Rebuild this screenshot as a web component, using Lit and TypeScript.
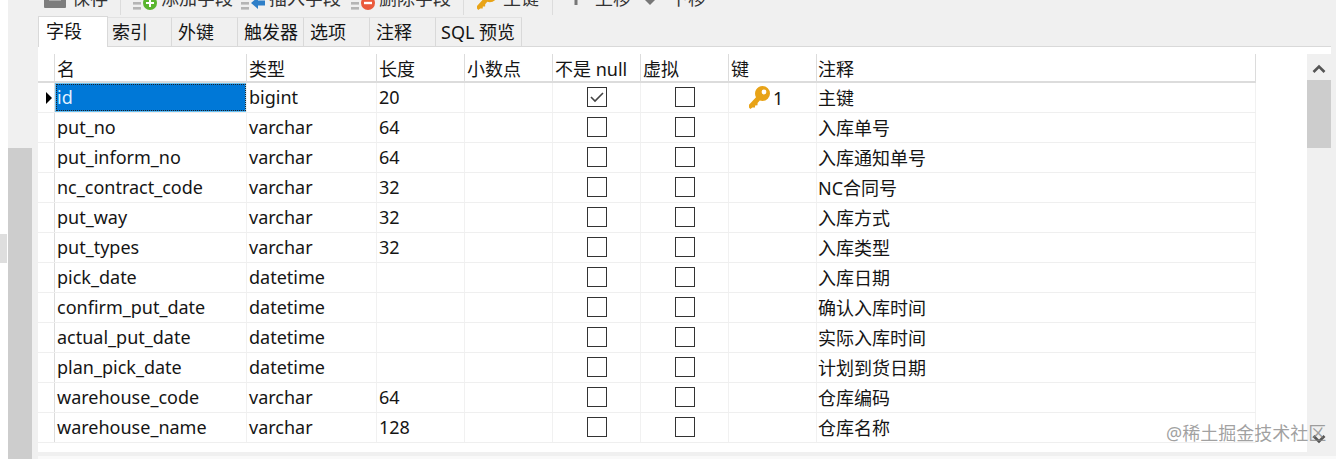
import { LitElement, html, css, svg } from "lit";
import { customElement } from "lit/decorators.js";

type Row = [string, string, string, string];
const rows: Row[] = [
  ["id", "bigint", "20", "主键"],
  ["put_no", "varchar", "64", "入库单号"],
  ["put_inform_no", "varchar", "64", "入库通知单号"],
  ["nc_contract_code", "varchar", "32", "NC合同号"],
  ["put_way", "varchar", "32", "入库方式"],
  ["put_types", "varchar", "32", "入库类型"],
  ["pick_date", "datetime", "", "入库日期"],
  ["confirm_put_date", "datetime", "", "确认入库时间"],
  ["actual_put_date", "datetime", "", "实际入库时间"],
  ["plan_pick_date", "datetime", "", "计划到货日期"],
  ["warehouse_code", "varchar", "64", "仓库编码"],
  ["warehouse_name", "varchar", "128", "仓库名称"],
];
const headers = ["名", "类型", "长度", "小数点", "不是 null", "虚拟", "键", "注释"];
const tabs = ["字段", "索引", "外键", "触发器", "选项", "注释", "SQL 预览"];

const keyIcon = (w: number, h: number, cls = "") => html`<svg class=${cls} width=${w} height=${h} viewBox="0 0 21 23">
  <path fill="#e8a317" d="M13.5 0a7.5 7.5 0 0 1 0 15c-1 0-1.9-.2-2.7-.5L8.6 17l-.1 2.3-2.4.1-.1 2.1-2.6.1L1.3 23 0 21.4v-2.6l7-7.6A7.5 7.5 0 0 1 13.5 0z"/>
  <circle cx="15" cy="6" r="2.4" fill="#fff"/></svg>`;
const lines = svg`<rect x="0" y="3" width="8" height="2.6" fill="#b5b5b5"/><rect x="0" y="8" width="8" height="2.6" fill="#b5b5b5"/><rect x="0" y="13" width="8" height="2.6" fill="#b5b5b5"/>`;

@customElement("app-root")
export class AppRoot extends LitElement {
  static styles = css`
    :host { display: block; width: 1341px; height: 459px; position: relative; overflow: hidden; background: #fff;
      font-family: "Noto Sans", "Noto Sans CJK SC", sans-serif; font-size: 18px; color: #151515; }
    .shell { display: flex; height: 459px; }
    .rail { width: 38px; flex: none; display: flex; }
    .rail-edge { width: 8px; flex: none; display: flex; flex-direction: column; padding-top: 234px; box-sizing: border-box; }
    .rail-chip { width: 7px; height: 29px; background: #dedede; }
    .rail-track { flex: 1; background: #f0f0f0; display: flex; padding: 148px 6px 0 0; }
    .rail-thumb { flex: 1; background: #cdcdcd; }
    .main { width: 1298px; flex: none; background: #f0f0f0; display: flex; flex-direction: column; }
    .toolbar { height: 15px; flex: none; overflow: hidden; display: flex; align-items: flex-end; }
    .tools { display: flex; align-items: center; height: 30px; flex: none; margin-bottom: 2px; line-height: 30px; color: #333; white-space: nowrap; }
    .tool { display: flex; align-items: center; gap: 4px; }
    .sep { width: 1px; height: 34px; background: #dcdcdc; }
    .ic { margin-top: 10px; }
    .ic-key { margin-top: 2px; }
    .ic-save { margin-top: -2px; }
    .tabs { height: 31px; flex: none; display: flex; align-items: flex-end; }
    .tab { height: 29px; box-sizing: border-box; padding-left: 6px; width: 66px; background: #f0f0f0; border-right: 1px solid #d9d9d9; border-top: 1px solid #e2e2e2; line-height: 28px; white-space: nowrap; }
    .tab.second { width: 64px; padding-left: 4px; }
    .tab.sql { width: 86px; padding-left: 5px; }
    .tab.active { height: 31px; width: 70px; background: #fff; border: 1px solid #d9d9d9; border-bottom: none; padding-left: 7px; line-height: 28px; margin-bottom: -1px; position: relative; z-index: 1; }
    .panel { height: 406px; flex: none; width: 1293px; background: #fff; border-top: 1px solid #d9d9d9; box-sizing: border-box; padding-top: 7px; display: flex; }
    .foot { height: 4px; flex: none; }
    .foot-light { flex: 1; background: #f9f9f9; }
    .grid { width: 1218px; flex: none; align-self: flex-start; }
    .row { display: grid; grid-template-columns: 17px 192px 130px 88px 88px 88px 88px 88px 439px; height: 30px; box-sizing: border-box; border-bottom: 1px solid #efefef; }
    .row.head { height: 29px; border-bottom: 2px solid #dcdcdc; }
    .cell { box-sizing: border-box; border-right: 1px solid #f1f1f1; padding: 0 0 1px 2px; white-space: nowrap; overflow: hidden; display: flex; align-items: center; }
    .head .cell { border-right: 1px solid #dcdcdc; padding-bottom: 0; padding-top: 1px; }
    .cell.note { padding-left: 1px; }
    .row .ind { border-right: 1px solid #dcdcdc; padding: 0 0 0 8px; }
    .tri { width: 0; height: 0; border-left: 6px solid #000; border-top: 6px solid transparent; border-bottom: 6px solid transparent; }
    .cell.sel { background: #0078d7; color: #dff0ff; outline: 1px dotted #222; outline-offset: -2px; box-shadow: inset 0 0 0 1px #6cc0f0; height: 29px; }
    .cell.center { justify-content: center; padding: 0 0 2px 0; }
    .cb { width: 20px; height: 20px; box-sizing: border-box; border: 1px solid #333; background: #fff; display: flex; align-items: center; justify-content: center; }
    .keycell { padding: 0 0 0 20px; gap: 3px; }
    .gap { flex: 1; }
    .vscroll { width: 24px; flex: none; background: #f0f0f0; height: 398px; display: flex; flex-direction: column; }
    .vbtn { height: 26px; flex: none; display: flex; align-items: center; justify-content: center; }
    .vbtn.up { padding-top: 4px; box-sizing: border-box; }
    .vthumb { height: 68px; flex: none; background: #cdcdcd; }
    .vfill { flex: 1; }
    .watermark { position: absolute; left: 1166px; top: 422px; font-size: 18px; line-height: 22px; color: rgba(130,130,130,.75); white-space: nowrap; }
  `;

  renderToolbar() {
    return html`<div class="toolbar"><div class="tools">
      <div class="tool" style="margin-left:6px;width:76px;gap:6px">
        <svg class="ic-save" width="22" height="22" viewBox="0 0 22 22"><rect width="22" height="22" rx="1" fill="#7d7d7d"/><rect x="5" y="7" width="12" height="2.4" fill="#f0f0f0"/><rect x="5" y="12" width="12" height="2.4" fill="#f0f0f0"/></svg>
        <span>保存</span></div>
      <div class="sep"></div>
      <div class="tool" style="margin-left:12px;width:108px">
        <svg class="ic" width="24" height="18" viewBox="0 0 24 18">${lines}<circle cx="17" cy="9" r="7" fill="#59b52e"/><path d="M17 5v8M13 9h8" stroke="#fff" stroke-width="2"/></svg>
        <span>添加字段</span></div>
      <div class="tool" style="width:110px">
        <svg class="ic" width="24" height="18" viewBox="0 0 24 18">${lines}<path d="M10 9l7-6v3.5h7v5h-7V15z" fill="#2f7fc8"/></svg>
        <span>插入字段</span></div>
      <div class="tool" style="width:112px">
        <svg class="ic" width="24" height="18" viewBox="0 0 24 18">${lines}<circle cx="17" cy="9" r="7" fill="#ea5a3c"/><path d="M13 9h8" stroke="#fff" stroke-width="2.4"/></svg>
        <span>删除字段</span></div>
      <div class="sep"></div>
      <div class="tool" style="margin-left:13px;width:75px;gap:6px">${keyIcon(20, 22, "ic-key")}<span>主键</span></div>
      <div class="sep"></div>
      <div class="tool" style="margin-left:16px;width:74px;gap:12px">
        <svg width="14" height="18" viewBox="0 0 14 18"><path d="M7 2l6 6H8.5v8h-3V8H1z" fill="#777"/></svg><span>上移</span></div>
      <div class="tool" style="gap:13px">
        <svg width="14" height="18" viewBox="0 0 14 18"><path d="M7 16l-6-6 6-6 6 6z" fill="#777"/></svg><span>下移</span></div>
    </div></div>`;
  }

  renderRow(r: Row, i: number) {
    const checked = i === 0;
    return html`<div class="row">
      <div class="cell ind">${checked ? html`<div class="tri"></div>` : ""}</div>
      <div class="cell ${checked ? "sel" : ""}">${r[0]}</div>
      <div class="cell">${r[1]}</div>
      <div class="cell">${r[2]}</div>
      <div class="cell"></div>
      <div class="cell center"><div class="cb">${checked ? html`<svg width="16" height="16" viewBox="0 0 16 16"><path d="M2 8l4 4 8-8" fill="none" stroke="#444" stroke-width="1.6"/></svg>` : ""}</div></div>
      <div class="cell center"><div class="cb"></div></div>
      <div class="cell keycell">${checked ? html`${keyIcon(21, 23)}<span>1</span>` : ""}</div>
      <div class="cell note">${r[3]}</div>
    </div>`;
  }

  render() {
    return html`<div class="shell">
      <div class="rail">
        <div class="rail-edge"><div class="rail-chip"></div></div>
        <div class="rail-track"><div class="rail-thumb"></div></div>
      </div>
      <div class="main">
        ${this.renderToolbar()}
        <div class="tabs">
          ${tabs.map((t, i) => html`<div class="tab ${i === 0 ? "active" : ""} ${i === 1 ? "second" : ""} ${i === 6 ? "sql" : ""}">${t}</div>`)}
        </div>
        <div class="panel">
          <div class="grid">
            <div class="row head">
              <div class="cell ind"></div>
              ${headers.map((h, i) => html`<div class="cell ${i === 7 ? "note" : ""}">${h}</div>`)}
            </div>
            ${rows.map((r, i) => this.renderRow(r, i))}
          </div>
          <div class="gap"></div>
          <div class="vscroll">
            <div class="vbtn up"><svg width="14" height="10" viewBox="0 0 14 10"><path d="M1.5 8L7 2.5 12.5 8" fill="none" stroke="#555" stroke-width="2.6"/></svg></div>
            <div class="vthumb"></div>
            <div class="vfill"></div>
            <div class="vbtn"><svg width="14" height="10" viewBox="0 0 14 10"><path d="M1.5 2L7 7.5 12.5 2" fill="none" stroke="#555" stroke-width="2.6"/></svg></div>
          </div>
        </div>
        <div class="foot"></div>
        <div class="foot-light"></div>
      </div>
    </div>
    <div class="watermark">@稀土掘金技术社区</div>`;
  }
}
